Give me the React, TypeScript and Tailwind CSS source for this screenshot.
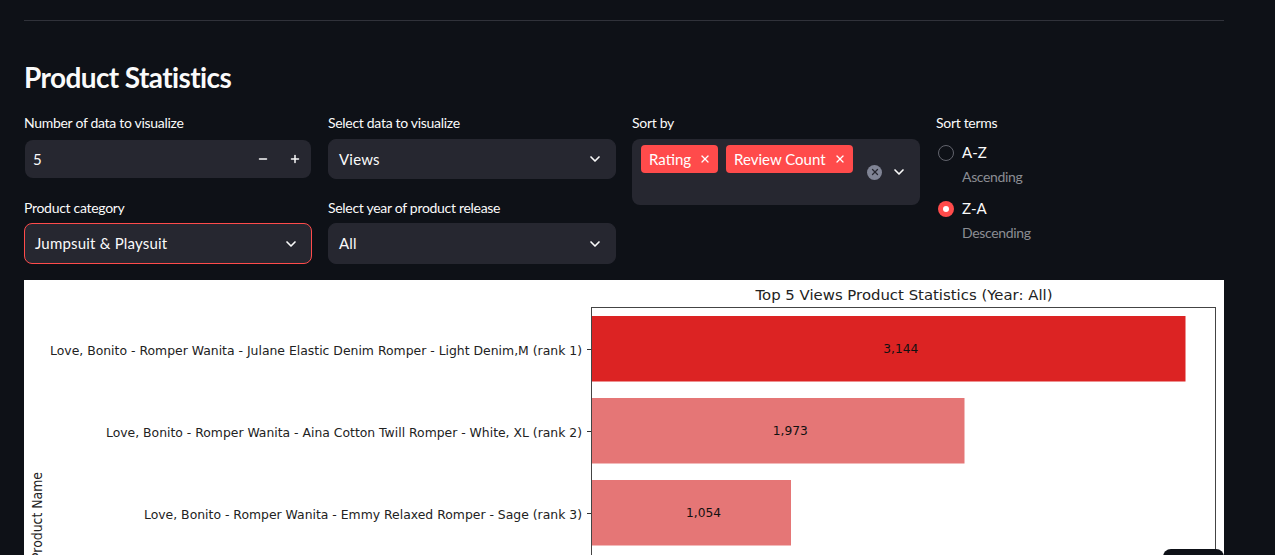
import { ChevronDown, Minus, Plus, X } from "lucide-react";

const Label = ({
  children,
  tight = false,
}: {
  children: React.ReactNode;
  tight?: boolean;
}) => (
  <div
    className={`h-[20px] text-[14px] leading-[20px] tracking-[-0.3px] text-[#fafafa] ${
      tight ? "mb-[5px]" : "mb-[6px]"
    }`}
  >
    {children}
  </div>
);

const SelectBox = ({
  value,
  active = false,
  tall = false,
}: {
  value: string;
  active?: boolean;
  tall?: boolean;
}) => (
  <div
    className={`flex items-center justify-between rounded-lg bg-[#262730] pl-[10px] pr-[12px] text-[15px] tracking-[0.2px] text-[#fafafa] border ${
      active ? "border-[#ff4b4b]" : "border-[#262730]"
    } ${tall ? "h-[41px]" : "h-[40px]"}`}
  >
    <span>{value}</span>
    <ChevronDown size={16} strokeWidth={2.5} />
  </div>
);

const Tag = ({ text }: { text: string }) => (
  <div className="flex h-[28px] items-center gap-[8px] rounded-[4px] bg-[#ff4b4b] pl-[8px] pr-[7px] text-[15px] text-white">
    <span>{text}</span>
    <X size={12} strokeWidth={2.5} />
  </div>
);

const RadioRow = ({
  label,
  hint,
  checked,
}: {
  label: string;
  hint: string;
  checked?: boolean;
}) => (
  <div className="flex gap-[8px] pl-[2px]">
    <div
      className={`mt-[6px] flex h-[16px] w-[16px] items-center justify-center rounded-full ${
        checked ? "bg-[#ff4b4b]" : "border border-[#62646d]"
      }`}
    >
      {checked && <div className="h-[6px] w-[6px] rounded-full bg-white" />}
    </div>
    <div>
      <div className="h-[28px] text-[15px] leading-[26px] text-[#fafafa]">{label}</div>
      <div className="h-[28px] text-[14px] leading-[20px] tracking-[-0.35px] text-[#8b8d93]">{hint}</div>
    </div>
  </div>
);

const bars = [
  {
    name: "Love, Bonito - Romper Wanita - Julane Elastic Denim Romper - Light Denim,M (rank 1)",
    value: "3,144",
    y: 36,
    width: 593.5,
    fill: "#dc2323",
    labelWidth: 532,
  },
  {
    name: "Love, Bonito - Romper Wanita - Aina Cotton Twill Romper - White, XL (rank 2)",
    value: "1,973",
    y: 118,
    width: 372.5,
    fill: "#e57676",
    labelWidth: 476,
  },
  {
    name: "Love, Bonito - Romper Wanita - Emmy Relaxed Romper - Sage (rank 3)",
    value: "1,054",
    y: 200,
    width: 199,
    fill: "#e57676",
    labelWidth: 438,
  },
];

// chart from the report, the source is a matplotlib png
const Chart = () => (
  <svg
    width="1200"
    height="275"
    viewBox="0 0 1200 275"
    className="block bg-white font-['DejaVu_Sans',sans-serif]"
  >
    <text x="880" y="20" textAnchor="middle" fontSize="14.5" fill="#222" textLength="297" lengthAdjust="spacingAndGlyphs">
      Top 5 Views Product Statistics (Year: All)
    </text>
    {bars.map((b) => (
      <g key={b.value}>
        <rect x="568" y={b.y} width={b.width} height="65.5" fill={b.fill} />
        <line x1="563" x2="568" y1={b.y + 33.5} y2={b.y + 33.5} stroke="#333" />
        <text x="558" y={b.y + 39} textAnchor="end" fontSize="12.5" fill="#222" textLength={b.labelWidth} lengthAdjust="spacingAndGlyphs">
          {b.name}
        </text>
        <text x={580 + b.width / 2} y={b.y + 37} textAnchor="middle" fontSize="12.5" fill="#111" textLength="35" lengthAdjust="spacingAndGlyphs">
          {b.value}
        </text>
      </g>
    ))}
    <rect x="567.5" y="27.5" width="624" height="260" fill="none" stroke="#444" />
    <text transform="translate(18,280) rotate(-90)" fontSize="13.5" fill="#222" textLength="88" lengthAdjust="spacingAndGlyphs">
      Product Name
    </text>
  </svg>
);

export default function App() {
  return (
    <div className="relative h-[555px] w-[1275px] overflow-hidden bg-[#0e1117] font-['Lato',sans-serif]">
      <div className="ml-[24px] w-[1200px] pt-[20px]">
        <div className="h-px bg-[#30323a]" />
        <h2 className="mt-[40px] h-[32px] text-[28px] font-bold leading-[32px] tracking-[-0.6px] text-[#fafafa]">
          Product Statistics
        </h2>
        <div className="mt-[20px] grid h-[167px] grid-cols-4 gap-x-[16px]">
          <div>
            <Label>Number of data to visualize</Label>
            <div className="mx-[1px] mt-[7px] flex h-[38px] items-center justify-between rounded-lg bg-[#262730] pl-[8px] pr-[10px] text-[15px] text-[#fafafa]">
              <span>5</span>
              <div className="flex items-center gap-[20px]">
                <Minus size={12} strokeWidth={3} />
                <Plus size={12} strokeWidth={3} />
              </div>
            </div>
            <div className="mt-[20px]">
              <Label tight>Product category</Label>
              <SelectBox value="Jumpsuit & Playsuit" active tall />
            </div>
          </div>
          <div>
            <Label>Select data to visualize</Label>
            <SelectBox value="Views" />
            <div className="mt-[19px]">
              <Label tight>Select year of product release</Label>
              <SelectBox value="All" tall />
            </div>
          </div>
          <div>
            <Label>Sort by</Label>
            <div className="flex h-[66px] items-start justify-between rounded-lg bg-[#262730] pl-[9px] pr-[13px] pt-[6px]">
              <div className="flex gap-[8px]">
                <Tag text="Rating" />
                <Tag text="Review Count" />
              </div>
              <div className="mt-[19px] flex items-center gap-[9px] text-[#fafafa]">
                <div className="flex h-[15px] w-[15px] items-center justify-center rounded-full bg-[#808495] text-[#262730]">
                  <X size={10} strokeWidth={3} />
                </div>
                <ChevronDown size={16} strokeWidth={2.5} />
              </div>
            </div>
          </div>
          <div>
            <Label>Sort terms</Label>
            <RadioRow label="A-Z" hint="Ascending" />
            <RadioRow label="Z-A" hint="Descending" checked />
          </div>
        </div>
        <Chart />
      </div>
      <div className="absolute left-[1163px] top-[549px] h-[10px] w-[61px] rounded-t-lg bg-[#0e1117]" />
    </div>
  );
}
